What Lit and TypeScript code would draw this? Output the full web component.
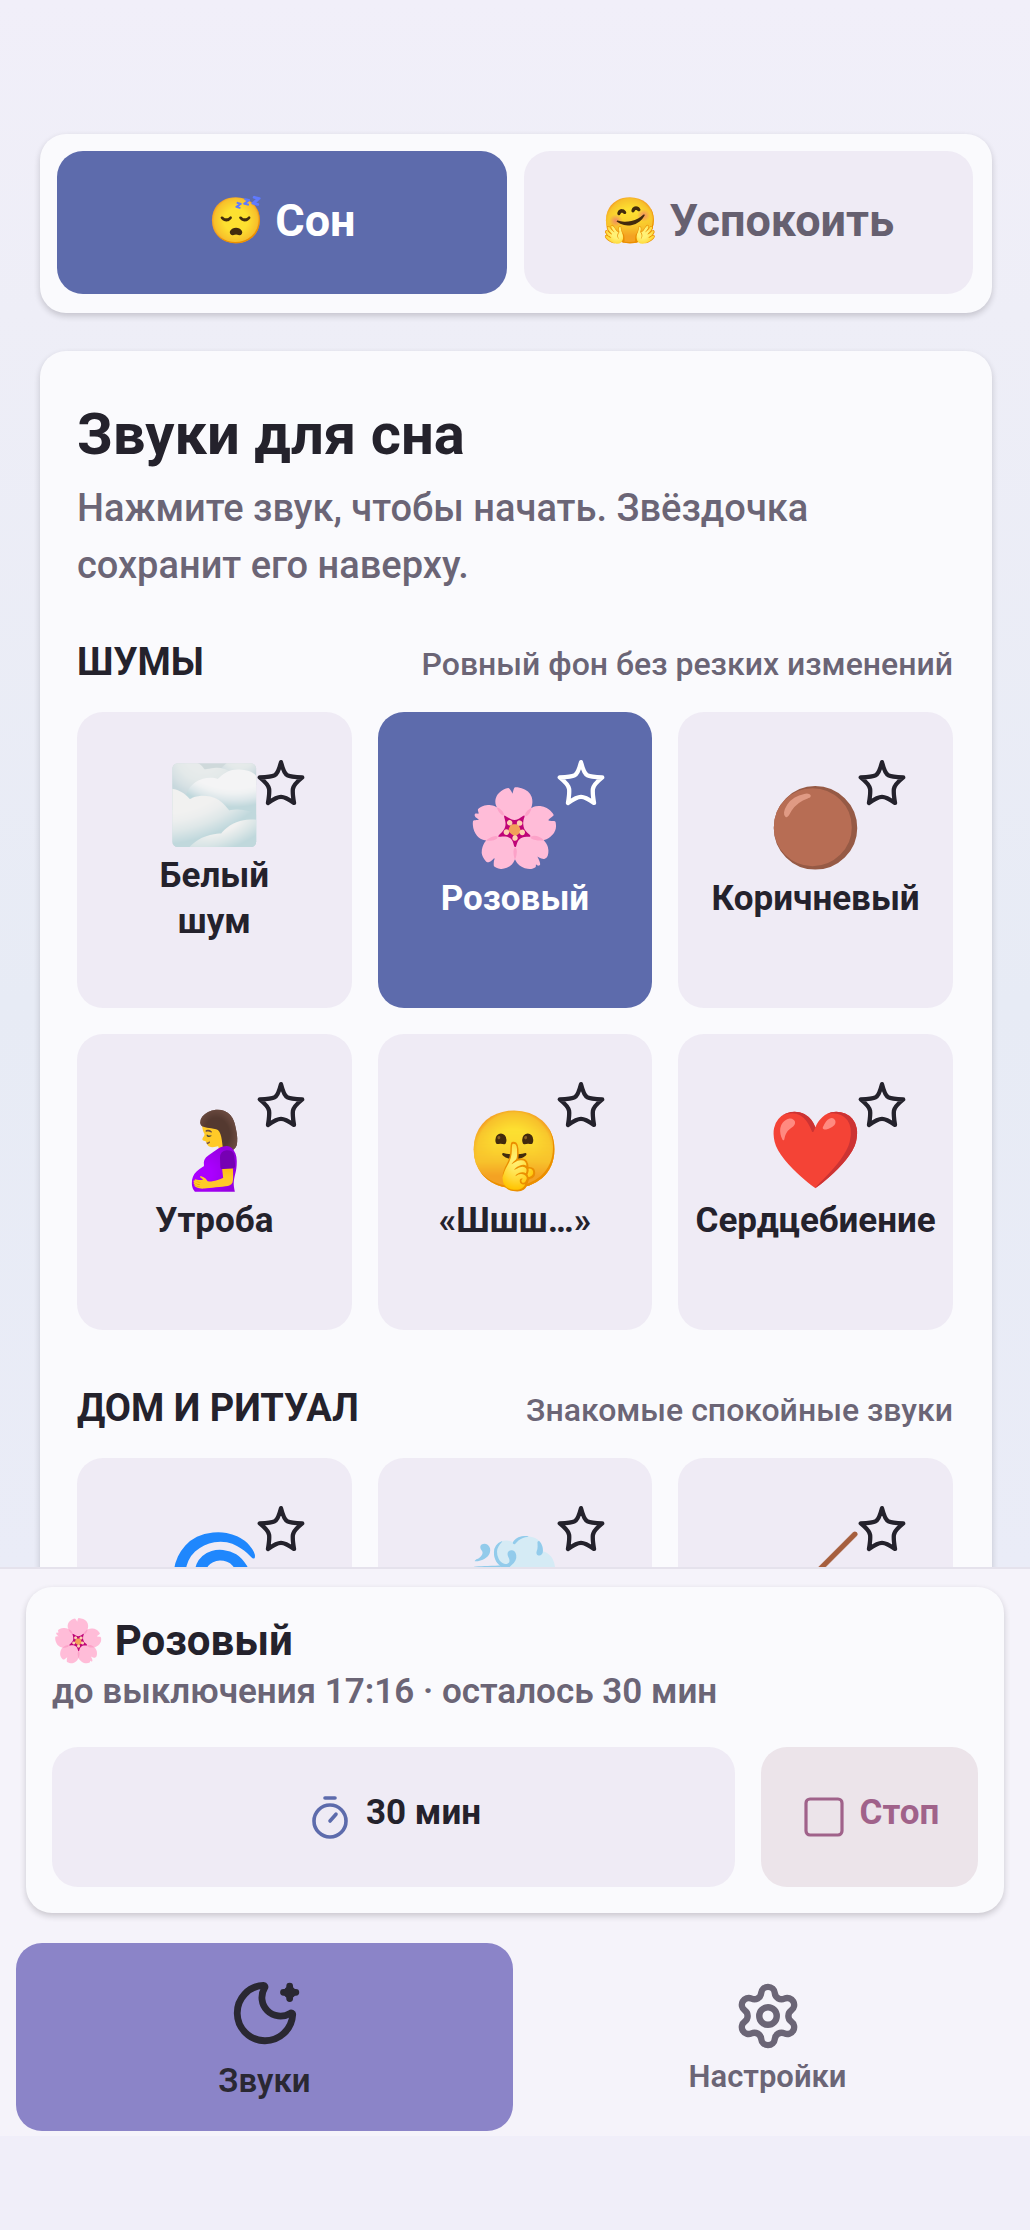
import { LitElement, html, css, svg } from 'lit'
import { customElement, property, state } from 'lit/decorators.js'
import { classMap } from 'lit/directives/class-map.js'

interface Sound {
    id: string
    emoji: string
    name: string
}

interface SoundGroup {
    title: string
    hint: string
    sounds: Sound[]
}

const GROUPS: SoundGroup[] = [
    {
        title: 'Шумы',
        hint: 'Ровный фон без резких изменений',
        sounds: [
            { id: 'white', emoji: '🌫️', name: 'Белый шум' },
            { id: 'pink', emoji: '🌸', name: 'Розовый' },
            { id: 'brown', emoji: '🟤', name: 'Коричневый' },
            { id: 'womb', emoji: '🤰', name: 'Утроба' },
            { id: 'shush', emoji: '🤫', name: '«Шшш…»' },
            { id: 'heart', emoji: '❤️', name: 'Сердцебиение' }
        ]
    },
    {
        title: 'Дом и ритуал',
        hint: 'Знакомые спокойные звуки',
        sounds: [
            { id: 'fan', emoji: '🌀', name: 'Вентилятор' },
            { id: 'dryer', emoji: '💨', name: 'Фен' },
            { id: 'vacuum', emoji: '🧹', name: 'Пылесос' }
        ]
    }
]

const MODES = [
    { id: 'sleep', emoji: '😴', name: 'Сон' },
    { id: 'calm', emoji: '🤗', name: 'Успокоить' }
]

const ICONS = {
    star: svg`<path d="M12 2.4c.9 3.5 1.8 5.5 3 6.1 1.2.7 3.4.8 6.8.9-2.7 2.2-4.1 3.9-4.3 5.3-.2 1.4 0 3.5.5 6.5-2.7-1.9-4.7-2.8-6-2.8s-3.3.9-6 2.8c.5-3 .7-5.1.5-6.5-.2-1.4-1.6-3.1-4.3-5.3 3.4-.1 5.6-.2 6.8-.9 1.2-.6 2.1-2.6 3-6.1z" />`,
    timer: svg`
        <path d="M9.5 2.5h5" />
        <circle cx="12" cy="14" r="8" />
        <path d="M12 14l3-3.4" />
    `,
    stop: svg`<rect x="3" y="3" width="18" height="18" rx="2" />`,
    moon: svg`
        <path d="M20.985 12.486a9 9 0 1 1-9.473-9.472c.405-.022.617.46.402.803a6 6 0 0 0 8.268 8.268c.344-.215.825-.004.803.401" />
        <path d="M20 3.3v4M18 5.3h4" />
        <circle cx="20" cy="5.3" r=".9" />
    `,
    gear: svg`
        <path d="M9.671 4.136a2.34 2.34 0 0 1 4.659 0 2.34 2.34 0 0 0 3.319 1.915 2.34 2.34 0 0 1 2.33 4.033 2.34 2.34 0 0 0 0 3.831 2.34 2.34 0 0 1-2.33 4.033 2.34 2.34 0 0 0-3.319 1.915 2.34 2.34 0 0 1-4.659 0 2.34 2.34 0 0 0-3.32-1.915 2.34 2.34 0 0 1-2.33-4.033 2.34 2.34 0 0 0 0-3.831A2.34 2.34 0 0 1 6.35 6.051a2.34 2.34 0 0 0 3.319-1.915" />
        <circle cx="12" cy="12" r="3" />
    `
}

@customElement('app-icon')
export class AppIcon extends LitElement {
    static styles = css`
        :host {
            display: block;
            flex: none;
            width: 48px;
            height: 48px;
        }

        .icon {
            display: block;
            width: 100%;
            height: 100%;
            fill: none;
            stroke: currentColor;
            stroke-linecap: round;
            stroke-linejoin: round;
        }
    `

    @property() name: keyof typeof ICONS = 'star'
    @property({ type: Number }) weight = 2

    render() {
        return html`
            <svg class="icon" viewBox="0 0 24 24" stroke-width=${this.weight} aria-hidden="true">
                ${ICONS[this.name]}
            </svg>
        `
    }
}

@customElement('sound-tile')
export class SoundTile extends LitElement {
    static styles = css`
        :host {
            display: block;
            position: relative;
        }

        button {
            box-sizing: border-box;
            margin: 0;
            border: 0;
            background: none;
            font: inherit;
            color: inherit;
            cursor: pointer;
        }

        .tile {
            display: flex;
            flex-direction: column;
            align-items: center;
            justify-content: center;
            gap: 10px;
            width: 100%;
            min-height: 296px;
            padding: 0 8px 8px;
            border-radius: 26px;
            background: #efebf5;
            color: #24222c;
        }

        .tile.selected {
            background: #5d6bac;
            color: #fff;
        }

        .emoji {
            font-size: 76px;
            line-height: 76px;
        }

        /* каждое слово на своей строке */
        .name {
            width: min-content;
            font-size: 35px;
            line-height: 46px;
            font-weight: 700;
        }

        /* звёздочка лежит поверх карточки */
        .star {
            position: absolute;
            top: 0;
            right: 0;
            display: grid;
            place-items: center;
            width: 142px;
            height: 142px;
            padding: 0;
            color: #24222c;
        }

        .star.selected {
            color: #fff;
        }

        .star app-icon {
            width: 52px;
            height: 52px;
        }
    `

    @property({ attribute: false }) sound!: Sound
    @property({ type: Boolean }) selected = false

    render() {
        const { emoji, name } = this.sound
        const selected = this.selected

        return html`
            <button class=${classMap({ tile: true, selected })} aria-pressed=${selected}>
                <span class="emoji">${emoji}</span>
                <span class="name">${name}</span>
            </button>
            <button
                class=${classMap({ star: true, selected })}
                aria-label="В избранное: ${name}"
                @click=${this.toggleStar}
            >
                <app-icon name="star" weight="2"></app-icon>
            </button>
        `
    }

    toggleStar(e: Event) {
        e.stopPropagation()
        this.dispatchEvent(new CustomEvent('star', { detail: this.sound.id }))
    }
}

@customElement('app-root')
export class AppRoot extends LitElement {
    static styles = css`
        :host {
            display: flex;
            flex-direction: column;
            box-sizing: border-box;
            height: 100vh;
            padding-bottom: 94px;
            background: #f0eef9;
            color: #24222c;
            font-family: Roboto, 'Noto Color Emoji', sans-serif;
        }

        * {
            box-sizing: border-box;
        }

        h1,
        h2,
        p {
            margin: 0;
        }

        button {
            margin: 0;
            padding: 0;
            border: 0;
            border-radius: 26px;
            font: inherit;
            color: inherit;
            cursor: pointer;
        }

        .content {
            flex: 1;
            min-height: 0;
            display: flex;
            flex-direction: column;
            gap: 38px;
            padding: 134px 38px 0 40px;
            overflow-y: auto;
            scrollbar-width: none;
            background: linear-gradient(#f1eff9, #eeeef7 20%, #e7ebf5 64%, #eaecf7);
        }

        .card {
            flex: none;
            border-radius: 26px;
            background: #fafafd;
            box-shadow: 0 3px 6px #1c1b2233;
        }

        .modes {
            display: grid;
            grid-template-columns: 1fr 1fr;
            gap: 17px;
            padding: 17px 19px 19px 17px;
        }

        .mode {
            min-height: 143px;
            padding-bottom: 4px;
            background: #efebf5;
            color: #666070;
            font-size: 45px;
            font-weight: 700;
        }

        .mode.active {
            background: #5d6bac;
            color: #fff;
        }

        .sounds {
            padding: 47px 39px 46px 37px;
        }

        .title {
            font-size: 58px;
            line-height: 72px;
            font-weight: 700;
        }

        .lead {
            padding-top: 10px;
            color: #6b6576;
            font-size: 38px;
            line-height: 57px;
            font-weight: 500;
        }

        .group {
            padding-top: 44px;
        }

        .group + .group {
            padding-top: 54px;
        }

        .group-head {
            display: flex;
            align-items: baseline;
            justify-content: space-between;
            padding-bottom: 24px;
            line-height: 48px;
        }

        .group-title {
            font-size: 38px;
            font-weight: 700;
            text-transform: uppercase;
        }

        .group-hint {
            color: #6b6576;
            font-size: 32px;
            font-weight: 500;
        }

        .grid {
            display: grid;
            grid-template-columns: repeat(3, minmax(0, 1fr));
            gap: 26px;
        }

        .dock {
            flex: none;
            border-top: 2px solid #e5e2ec;
            background: #f5f3fa;
        }

        .player {
            margin: 18px 26px 0;
            padding: 26px;
        }

        .now {
            font-size: 42px;
            line-height: 56px;
            font-weight: 700;
        }

        .status {
            color: #6b6576;
            font-size: 35px;
            line-height: 46px;
            font-weight: 600;
        }

        .actions {
            display: grid;
            grid-template-columns: minmax(0, 1fr) 217px;
            gap: 26px;
            padding-top: 32px;
        }

        .action {
            display: flex;
            align-items: center;
            justify-content: center;
            gap: 12px;
            min-height: 140px;
            font-size: 35px;
            font-weight: 700;
        }

        .action-label {
            padding-bottom: 10px;
        }

        .timer {
            background: #efebf5;
        }

        .timer app-icon {
            color: #5d6bac;
        }

        .stop {
            background: #ece4ea;
            color: #a0628a;
        }

        .tabs {
            display: grid;
            grid-template-columns: 1fr 1fr;
            gap: 6px;
            padding: 30px 14px 5px 16px;
        }

        .tab {
            display: flex;
            flex-direction: column;
            align-items: center;
            justify-content: center;
            gap: 3px;
            min-height: 188px;
            padding-top: 6px;
            background: none;
            color: #6b6576;
            font-size: 31px;
            line-height: 46px;
            font-weight: 600;
        }

        .tab app-icon {
            width: 70px;
            height: 70px;
        }

        .tab.active {
            gap: 8px;
            background: #8b84c8;
            color: #2a2832;
            font-size: 33px;
        }

        .tab.active app-icon {
            width: 74px;
            height: 74px;
        }
    `

    @state() mode = 'sleep'
    @state() current = 'pink'
    @state() tab = 'sounds'

    render() {
        return html`
            <main class="content">
                <div class="card modes">${MODES.map((m) => this.renderMode(m))}</div>
                <div class="card sounds">
                    <h1 class="title">Звуки для сна</h1>
                    <p class="lead">
                        Нажмите звук, чтобы начать. Звёздочка сохранит его наверху.
                    </p>
                    ${GROUPS.map((g) => this.renderGroup(g))}
                </div>
            </main>
            <footer class="dock">
                ${this.renderPlayer()}
                <nav class="tabs">
                    ${this.renderTab('sounds', 'moon', 'Звуки')}
                    ${this.renderTab('settings', 'gear', 'Настройки')}
                </nav>
            </footer>
        `
    }

    renderMode(m: { id: string; emoji: string; name: string }) {
        return html`
            <button
                class=${classMap({ mode: true, active: this.mode === m.id })}
                @click=${() => (this.mode = m.id)}
            >
                ${m.emoji} ${m.name}
            </button>
        `
    }

    renderGroup(group: SoundGroup) {
        return html`
            <section class="group">
                <div class="group-head">
                    <h2 class="group-title">${group.title}</h2>
                    <span class="group-hint">${group.hint}</span>
                </div>
                <div class="grid">
                    ${group.sounds.map(
                        (s) => html`
                            <sound-tile
                                .sound=${s}
                                ?selected=${this.current === s.id}
                                @click=${() => (this.current = s.id)}
                            ></sound-tile>
                        `
                    )}
                </div>
            </section>
        `
    }

    renderPlayer() {
        const sound = GROUPS.flatMap((g) => g.sounds).find((s) => s.id === this.current)!

        return html`
            <section class="card player">
                <p class="now">${sound.emoji} ${sound.name}</p>
                <p class="status">до выключения 17:16 · осталось 30 мин</p>
                <div class="actions">
                    <button class="action timer">
                        <app-icon name="timer" weight="1.8"></app-icon>
                        <span class="action-label">30 мин</span>
                    </button>
                    <button class="action stop">
                        <app-icon name="stop" weight="1.6"></app-icon>
                        <span class="action-label">Стоп</span>
                    </button>
                </div>
            </section>
        `
    }

    renderTab(id: string, icon: string, label: string) {
        return html`
            <button
                class=${classMap({ tab: true, active: this.tab === id })}
                @click=${() => (this.tab = id)}
            >
                <app-icon name=${icon} weight="2.2"></app-icon>
                ${label}
            </button>
        `
    }
}
